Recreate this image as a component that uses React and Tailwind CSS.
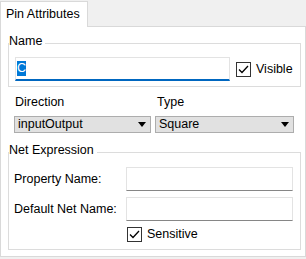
import React from "react";

function Check() {
  return (
    <span className="w-[15px] h-[15px] shrink-0 border border-[#333333] bg-white flex items-center justify-center">
      <svg width="13" height="13" viewBox="0 0 13 13">
        <polyline points="2,6.5 5,9.5 11,3" fill="none" stroke="#000" strokeWidth="1.3" />
      </svg>
    </span>
  );
}

function Combo({ value }) {
  return (
    <div className="h-[17px] border border-[#adadad] bg-[#e1e1e1] flex items-center justify-between pl-[3px] pr-[4px] leading-[15px]">
      <span>{value}</span>
      <svg width="8" height="5" viewBox="0 0 8 5">
        <polygon points="0,0 8,0 4,5" fill="#000" />
      </svg>
    </div>
  );
}

function Group({ title, className, children }) {
  return (
    <div className={"relative ml-[7px] w-[293px] border border-[#dcdcdc] " + className}>
      <div className="absolute left-0 top-[-10px] h-[16px] leading-[15px] bg-white pr-[3px]">
        {title}
      </div>
      {children}
    </div>
  );
}

function Field({ label }) {
  return (
    <div className="flex items-center">
      <span className="w-[117px] pl-[5px]">{label}</span>
      <div className="w-[167px] h-[24px] bg-white border border-[#e3e3e3] border-b-[#868686]" />
    </div>
  );
}

export default function App() {
  return (
    <div className="w-[306px] h-[259px] bg-[#f0f0f0] text-black text-[12.5px] font-['Liberation_Sans',Arial,sans-serif] flex flex-col pt-[1px]">
      <div className="relative z-10 w-[88px] h-[26px] bg-white border border-b-0 border-[#d9d9d9] pt-[5px] pl-[5px] leading-[15px]">
        Pin Attributes
      </div>

      <div className="-mt-px h-[231px] w-[306px] bg-white border border-[#d9d9d9] pt-[16px] flex flex-col">
        <Group title="Name" className="h-[44px] pt-[13px] pl-[6px]">
          <div className="flex items-center">
            <div className="w-[215px] h-[24px] border border-[#e3e3e3] border-b-2 border-b-[#0067c0] flex items-center pl-px">
              <span className="h-[15px] leading-[15px] bg-[#0078d7] text-white">C</span>
            </div>
            <div className="ml-[6px]">
              <Check />
            </div>
            <span className="ml-[5px] leading-[15px]">Visible</span>
          </div>
        </Group>

        <div className="mt-[8px] ml-[13px] flex gap-[4px]">
          <div className="w-[137px] flex flex-col gap-[6px]">
            <span className="leading-[15px] pl-px">Direction</span>
            <Combo value="inputOutput" />
          </div>
          <div className="w-[139px] flex flex-col gap-[6px]">
            <span className="leading-[15px] pl-[2px]">Type</span>
            <Combo value="Square" />
          </div>
        </div>

        <Group title="Net Expression" className="mt-[19px] h-[98px] pt-[14px]">
          <div className="flex flex-col gap-[6px]">
            <Field label="Property Name:" />
            <Field label="Default Net Name:" />
            <div className="flex items-center pl-[118px]">
              <Check />
              <span className="ml-[5px] leading-[15px]">Sensitive</span>
            </div>
          </div>
        </Group>
      </div>
    </div>
  );
}
